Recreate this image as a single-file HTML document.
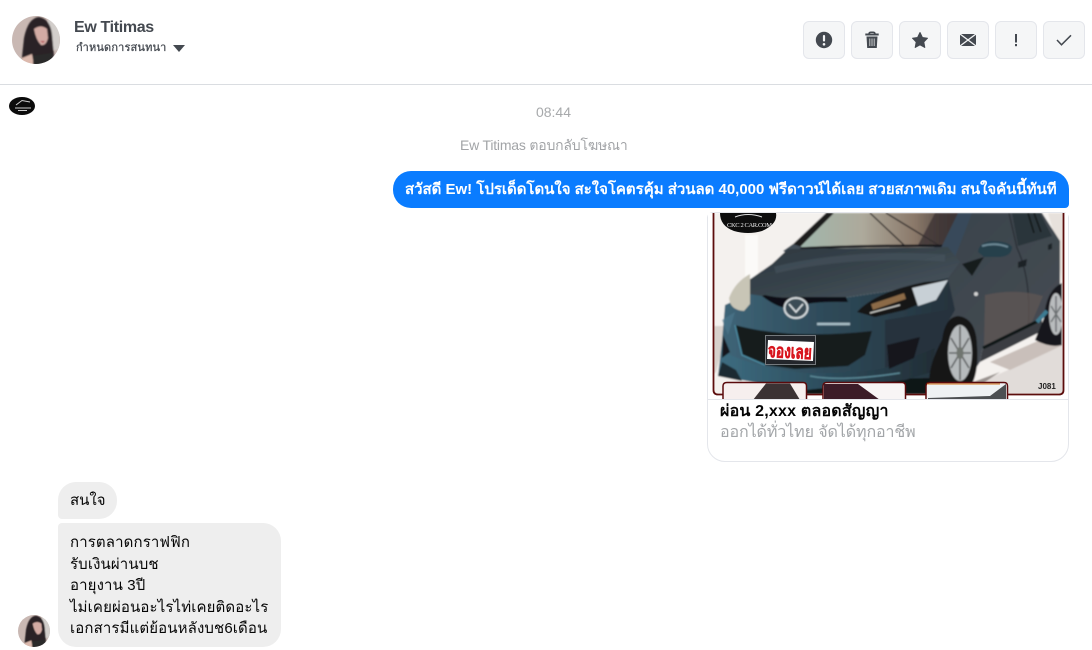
<!DOCTYPE html>
<html lang="th"><head><meta charset="utf-8"><title>Chat</title>
<style>
html,body{margin:0;padding:0;background:#fff}
body{width:1092px;height:650px;overflow:hidden;position:relative;font-family:"Liberation Sans","Noto Sans CJK SC",sans-serif;color:#050505}
.a{position:absolute;white-space:nowrap}
.btn{position:absolute;top:21px;width:40px;height:36px;border:1px solid #e4e6eb;border-radius:6px;background:#f5f6f7}
.btn svg{position:absolute;left:0;top:0}
</style></head><body>
<svg class="a" style="left:12px;top:16px" width="48" height="48" viewBox="0 0 48 48"><defs><clipPath id="c1"><circle cx="24" cy="24" r="24"/></clipPath><filter id="bl" x="-10%" y="-10%" width="120%" height="120%"><feGaussianBlur stdDeviation=".8"/></filter></defs><g clip-path="url(#c1)"><rect width="48" height="48" fill="#c9b8b3"/><g filter="url(#bl)"><rect x="36" width="12" height="34" fill="#d2cecb"/><path d="M9 50L12 22Q16 2 27 1Q38 3 40 18L42 40L22 50Z" fill="#2b2425"/><path d="M22 13Q29 8 35 13L36 22Q34 30 29 29Q24 24 22 13Z" fill="#d3aba4"/><path d="M28 25l5 0-2 2z" fill="#b24d55"/><path d="M8 50L10 42L20 38L22 50Z" fill="#dcb9ad"/><path d="M21 40L40 37L44 50H21Z" fill="#2b2a2b"/></g></g></svg>
<div class="a" style="left:74px;top:18px;font-size:16px;line-height:20px;font-weight:bold;color:#444950;letter-spacing:-.35px">Ew Titimas</div>
<div class="a" style="left:76px;top:41px;font-size:11px;line-height:15px;color:#444950;letter-spacing:.15px;-webkit-text-stroke:.25px #444950">กำหนดการสนทนา</div>
<svg class="a" style="left:173px;top:45px" width="12" height="7"><path d="M0 0H12L6 7Z" fill="#444950"/></svg>
<div class="btn" style="left:803px"><svg width="40" height="36"><circle cx="20" cy="18" r="8.200" fill="#444950"/><rect x="18.900" y="13" width="2.200" height="6.500" rx="1" fill="#f5f6f7"/><circle cx="20" cy="22.300" r="1.300" fill="#f5f6f7"/></svg></div>
<div class="btn" style="left:851px"><svg width="40" height="36"><path d="M13.300 12.500H26.700" stroke="#444950" stroke-width="2"/><path d="M17 12q0-1.700 2-1.700h2q2 0 2 1.700" fill="none" stroke="#444950" stroke-width="1.500"/><path d="M14.500 14.500H25.500L24.800 26H15.200Z" fill="#444950"/><path d="M17.800 16.500V24M20 16.500V24M22.200 16.500V24" stroke="#c9cacc" stroke-width="1"/></svg></div>
<div class="btn" style="left:899px"><svg width="40" height="36"><path d="M20 10.500L22.400 15.500L27.500 16.200L23.800 20L24.800 25.500L20 22.800L15.200 25.500L16.200 20L12.500 16.200L17.600 15.500Z" fill="#444950" stroke="#444950" stroke-linejoin="round"/></svg></div>
<div class="btn" style="left:947px"><svg width="40" height="36"><rect x="12" y="12" width="16" height="12" fill="#444950"/><path d="M12 12L28 24M28 12L12 24" fill="none" stroke="#f5f6f7" stroke-width="1.300"/></svg></div>
<div class="btn" style="left:995px"><svg width="40" height="36"><path d="M20 12V20.500" stroke="#444950" stroke-width="2"/><rect x="19" y="22" width="2" height="2.200" fill="#444950"/></svg></div>
<div class="btn" style="left:1043px"><svg width="40" height="36"><path d="M13 18L17.500 22.800L27 13.300" fill="none" stroke="#444950" stroke-width="1.500"/></svg></div>
<div class="a" style="left:0;top:84px;width:1092px;height:1px;background:#dadde1"></div>
<svg class="a" style="left:9px;top:97px" width="26" height="18"><ellipse cx="13" cy="9" rx="13" ry="9" fill="#0b0b0b"/><path d="M7 8L13 3.500L21 5M6 11H22M9 13.500H18" stroke="#cfcfcf" stroke-width="1" fill="none"/></svg>
<div class="a" style="left:0;top:104px;width:1107px;text-align:center;font-size:14px;line-height:17px;color:#a7a9ab">08:44</div>
<div class="a" style="left:460px;top:137px;font-size:14px;line-height:17px;color:#a2a4a7;letter-spacing:-.2px">Ew Titimas ตอบกลับโฆษณา</div>
<div class="a" style="left:393px;top:171px;width:676px;height:37px;background:#0a7cff;border-radius:18px 18px 4px 18px"></div>
<div class="a" style="left:405px;top:180px;font-size:15px;line-height:20px;color:#fff;font-weight:bold;letter-spacing:-.02px">สวัสดี Ew! โปรเด็ดโดนใจ สะใจโคตรคุ้ม ส่วนลด 40,000 ฟรีดาวน์ได้เลย สวยสภาพเดิม สนใจคันนี้ทันที</div>
<div class="a" style="left:707px;top:212px;width:360px;height:248px;border:1px solid #e4e6eb;border-radius:6px 6px 18px 18px"></div>
<svg class="a" style="left:708px;top:213px" width="360" height="187" viewBox="708 213 360 187"><defs>
<filter id="soft" x="-2%" y="-2%" width="104%" height="104%"><feGaussianBlur stdDeviation=".7"/></filter>
<linearGradient id="hood" x1="0" y1="0" x2="1" y2="1"><stop offset="0" stop-color="#2d373f"/><stop offset=".5" stop-color="#38444c"/><stop offset="1" stop-color="#4e5962"/></linearGradient>
<linearGradient id="side" x1="0" y1="0" x2="1" y2="1"><stop offset="0" stop-color="#35404a"/><stop offset="1" stop-color="#4a4e54"/></linearGradient>
<linearGradient id="bump" x1="0" y1="0" x2="1" y2="0"><stop offset="0" stop-color="#3f6679"/><stop offset=".45" stop-color="#2e4a59"/><stop offset="1" stop-color="#25323c"/></linearGradient>
<linearGradient id="glass" x1="0" y1="0" x2="1" y2="0"><stop offset="0" stop-color="#9fb8ae"/><stop offset=".4" stop-color="#ada99b"/><stop offset=".7" stop-color="#8a7869"/><stop offset="1" stop-color="#332f31"/></linearGradient>
<linearGradient id="lip" x1="0" y1="0" x2="1" y2="0"><stop offset="0" stop-color="#3d6c80"/><stop offset=".5" stop-color="#2c4c5c"/><stop offset="1" stop-color="#222d35"/></linearGradient>
</defs>
<rect x="708" y="213" width="360" height="187" fill="#fff"/>
<g filter="url(#soft)">
<rect x="714" y="213" width="349" height="181" fill="#f4f1ee"/>
<path d="M745 235H758V285H745Z" fill="#fbfaf8"/>
<path d="M714 326H728L716 372L714 374Z" fill="#d8d1cc"/>
<path d="M975 385L1063 345V394H940Z" fill="#e1dcd9"/>
<path d="M990 362L1040 340L1063 345L1010 370Z" fill="#c9bfba"/>
<path d="M1048 213H1063V290L1056 240Z" fill="#e7e1dc"/>
<!-- side body -->
<path d="M965 213H1042L1060 241V285L1050 300L1042 318L982 350L980 362L960 392H880L900 285Z" fill="url(#side)"/>
<path d="M1012 213H1040L1052 236L1018 246Z" fill="#2c343b"/>
<path d="M1028 213L1034 233M1034 213L1041 232" stroke="#101317" stroke-width="1.500"/>
<path d="M1009 213L1017 248Q1032 280 1028 330" stroke="#262c31" stroke-width="1.200" fill="none"/>
<path d="M985 295Q1015 288 1043 296L1032 322L984 346Z" fill="#5e5552" opacity=".8"/>
<path d="M1042 331L980 362L982 350L1042 319Z" fill="#3a3d42"/>
<!-- rear wheel -->
<path d="M1062 283Q1046 290 1044 318L1035 340Q1050 348 1062 345Z" fill="#17181a"/>
<ellipse cx="1056" cy="314" rx="7" ry="21" fill="#b9bcbe"/>
<path d="M1056 296V332M1051 306L1061 322M1061 306L1051 322" stroke="#6c7072" stroke-width="1.500"/>
<!-- windshield -->
<path d="M793 249L834 213H967L947 247Z" fill="url(#glass)"/>
<path d="M826 213H834L800 247H790Z" fill="#1b1b1d"/>
<path d="M870 213L905 246M886 213L940 246" stroke="#2a2626" stroke-width="1.300" fill="none"/>
<path d="M935 213H967L947 246L918 245Z" fill="#3a3032" opacity=".75"/>
<path d="M790 249Q870 245 950 246" stroke="#14171a" stroke-width="2.500" fill="none"/>
<path d="M958 213L936 258L950 270L972 213Z" fill="#38495a"/>
<!-- left mirror stub -->
<path d="M783 251L793 244L802 247L792 255Z" fill="#434e57"/>
<!-- hood -->
<path d="M749 296L749 280L772 264L788 249L948 247L960 262L948 278L890 291L842 298L790 300Z" fill="url(#hood)"/>
<path d="M775 270Q850 252 945 258" stroke="#4a5761" stroke-width="7" fill="none" opacity=".5"/>
<!-- bumper and fender -->
<path d="M725 305L749 294L790 300L842 298L890 291L948 278L955 310L948 322L940 350L930 392H805L748 381L718 376L722 341Z" fill="url(#bump)"/>
<!-- shadow under -->
<path d="M805 380L935 378L930 394H805Z" fill="#101316"/>
<!-- fender dark -->
<path d="M885 320L948 310L938 365L885 378Z" fill="#27333c"/>
<!-- lip -->
<path d="M722 351Q755 368 805 373Q855 374 885 368L935 348L932 372L905 380L805 390L748 381L719 376Z" fill="url(#lip)"/>
<path d="M742 381L718 376L722 362L736 370Z" fill="#1d2a33"/>
<path d="M810 376Q840 382 900 373" stroke="#5a8795" stroke-width="1.500" fill="none"/>
<!-- headlights -->
<path d="M750 274Q735 282 729 298Q730 310 744 311L750 304Z" fill="#c8c5b6"/>
<path d="M857 312Q875 292 925 282L947 280L938 296L905 310L875 317Z" fill="#141618"/>
<path d="M912 288L948 280L936 300L918 306Z" fill="#c8d0d6"/>
<path d="M872 307L905 296" stroke="#8c6a46" stroke-width="6"/>
<path d="M870 313L900 305" stroke="#d5d5d0" stroke-width="1.200"/>
<!-- grille top -->
<path d="M762 296Q785 314 800 306Q812 301 848 302L846 297H800Q780 299 765 295Z" fill="#0f1113"/>
<ellipse cx="796" cy="308" rx="11.500" ry="10" fill="#3b4c55" stroke="#d4d9dc" stroke-width="2"/>
<path d="M789 304L796 312L803 304" stroke="#dde1e4" stroke-width="1.600" fill="none"/>
<path d="M817 324H850" stroke="#a9bec7" stroke-width="2.500"/>
<path d="M722 320L735 312L728 335Z" fill="#4d7a90" opacity=".6"/>
<!-- lower grille -->
<path d="M735 325Q790 340 872 331L865 355L848 366L795 369L765 365L742 355Z" fill="#161b1f"/>
<path d="M735 325L742 355L765 365" stroke="#4d8ea5" stroke-width="1.300" fill="none"/>
<path d="M723 335L730 352L722 358Z" fill="#12161a"/>
<path d="M887 345L920 337L914 358L889 369Z" fill="#14191d"/>
<!-- front wheel -->
<path d="M942 340Q945 317 958 316Q976 318 977 345Q979 370 972 384L930 388Q926 370 942 340Z" fill="#141516"/>
<ellipse cx="960" cy="353" rx="12" ry="28" fill="#b6babc"/>
<path d="M960 326V380M951 338L969 368M969 338L951 368M949 353H971" stroke="#5f6264" stroke-width="1.600"/>
<ellipse cx="960" cy="353" rx="3.500" ry="6" fill="#70746f"/>
<path d="M952 390L1000 372L970 392Z" fill="#5d5550" opacity=".6"/>
<!-- mirror -->
<path d="M978 252Q979 242 992 241Q1008 241 1012 247Q1012 256 1000 257H984Z" fill="#263f4c"/>
<path d="M982 246Q995 242 1008 247" stroke="#6d8996" stroke-width="2" fill="none"/>
<path d="M962 264L984 257L972 276Z" fill="#161a1e"/>
<path d="M1018 262L1027 259L1026 266L1018 268Z" fill="#1c2226"/>
<path d="M1048 245l4-2v6l-4 1z" fill="#1c2226"/>
<circle cx="976" cy="294" r="2" fill="#d3d3d3"/>
<path d="M983 348L1040 320" stroke="#101316" stroke-width="3"/>
<path d="M1037 322L1047 311" stroke="#3e7c93" stroke-width="4"/>
</g>
<!-- frame -->
<path d="M713.500 213V390Q713.500 394.500 718 394.500H1059Q1063.500 394.500 1063.500 390V213" fill="none" stroke="#5c0d0c" stroke-width="1.800"/>
<!-- plate -->
<rect x="765.500" y="335.500" width="50" height="29" fill="#23262b" stroke="#74797d" stroke-width="1"/>
<path d="M768 340L814 342L813 361L767 359Z" fill="#fff"/>
<text x="768" y="358" font-family="Liberation Sans,sans-serif" font-size="19" font-weight="bold" fill="#d8161e" stroke="#d8161e" stroke-width=".5" textLength="44" lengthAdjust="spacingAndGlyphs" transform="rotate(3 790 350)">จองเลย</text>
<text x="1038" y="389" font-family="Liberation Sans,sans-serif" font-size="8" font-weight="bold" fill="#222">J081</text>
<!-- logo -->
<path d="M720 213H776Q778 224 762 231Q748 235 734 231Q720 226 720 213Z" fill="#0d0d0d"/>
<path d="M735 217Q748 212 762 217" stroke="#ddd" stroke-width="1" fill="none"/>
<text x="727" y="227" font-family="Liberation Serif,serif" font-size="6.500" fill="#eee" textLength="45">CKC 2 CAR.COM</text>
<!-- thumbs -->
<path d="M723 400V386Q723 382.500 727 382.500H803Q806.500 382.500 806.500 386V400Z" fill="#f6efee" stroke="#5a0a0c" stroke-width="1.500"/>
<path d="M753 400L766 383.500H790L800 400Z" fill="#3b3234"/>
<path d="M823 400V386Q823 382.500 827 382.500H902Q905.500 382.500 905.500 386V400Z" fill="#f8f5f5" stroke="#5a0a0c" stroke-width="1.500"/>
<path d="M824 400V384H858L880 400Z" fill="#3c1c28"/>
<path d="M926 400V386Q926 382.500 930 382.500H1004Q1007.500 382.500 1007.500 386V400Z" fill="#eef1f3" stroke="#5a0a0c" stroke-width="1.500"/>
<path d="M927 384H1000" stroke="#d4771e" stroke-width="1"/>
<path d="M928 398L990 396L1006 384V400H928Z" fill="#4c4f52"/>
</svg>
<div class="a" style="left:708px;top:399px;width:360px;height:1px;background:#e4e6eb"></div>
<div class="a" style="left:720px;top:402px;font-size:16px;line-height:20px;font-weight:bold;color:#050505;letter-spacing:.2px">ผ่อน 2,xxx ตลอดสัญญา</div>
<div class="a" style="left:720px;top:423px;font-size:16px;line-height:20px;color:#a2a5a8;letter-spacing:-.1px">ออกได้ทั่วไทย จัดได้ทุกอาชีพ</div>
<div class="a" style="left:58px;top:482px;width:59px;height:37px;background:#eeeeee;border-radius:18px 18px 18px 4px"></div>
<div class="a" style="left:70px;top:491px;font-size:15px;line-height:20px">สนใจ</div>
<div class="a" style="left:58px;top:523px;width:223px;height:124px;background:#eeeeee;border-radius:4px 18px 18px 18px"></div>
<div class="a" style="left:70px;top:532px;font-size:15px;line-height:21.500px;letter-spacing:.12px">การตลาดกราฟฟิก<br>รับเงินผ่านบช<br>อายุงาน 3ปี<br>ไม่เคยผ่อนอะไรไท่เคยติดอะไร<br>เอกสารมีแต่ย้อนหลังบช6เดือน</div>
<svg class="a" style="left:18px;top:615px" width="32" height="32" viewBox="0 0 48 48"><defs><clipPath id="c2"><circle cx="24" cy="24" r="24"/></clipPath></defs><g clip-path="url(#c2)"><rect width="48" height="48" fill="#c9b8b3"/><g filter="url(#bl)"><rect x="36" width="12" height="34" fill="#d2cecb"/><path d="M9 50L12 22Q16 2 27 1Q38 3 40 18L42 40L22 50Z" fill="#2b2425"/><path d="M22 13Q29 8 35 13L36 22Q34 30 29 29Q24 24 22 13Z" fill="#d3aba4"/><path d="M8 50L10 42L20 38L22 50Z" fill="#dcb9ad"/><path d="M21 40L40 37L44 50H21Z" fill="#2b2a2b"/></g></g></svg>
</body></html>
